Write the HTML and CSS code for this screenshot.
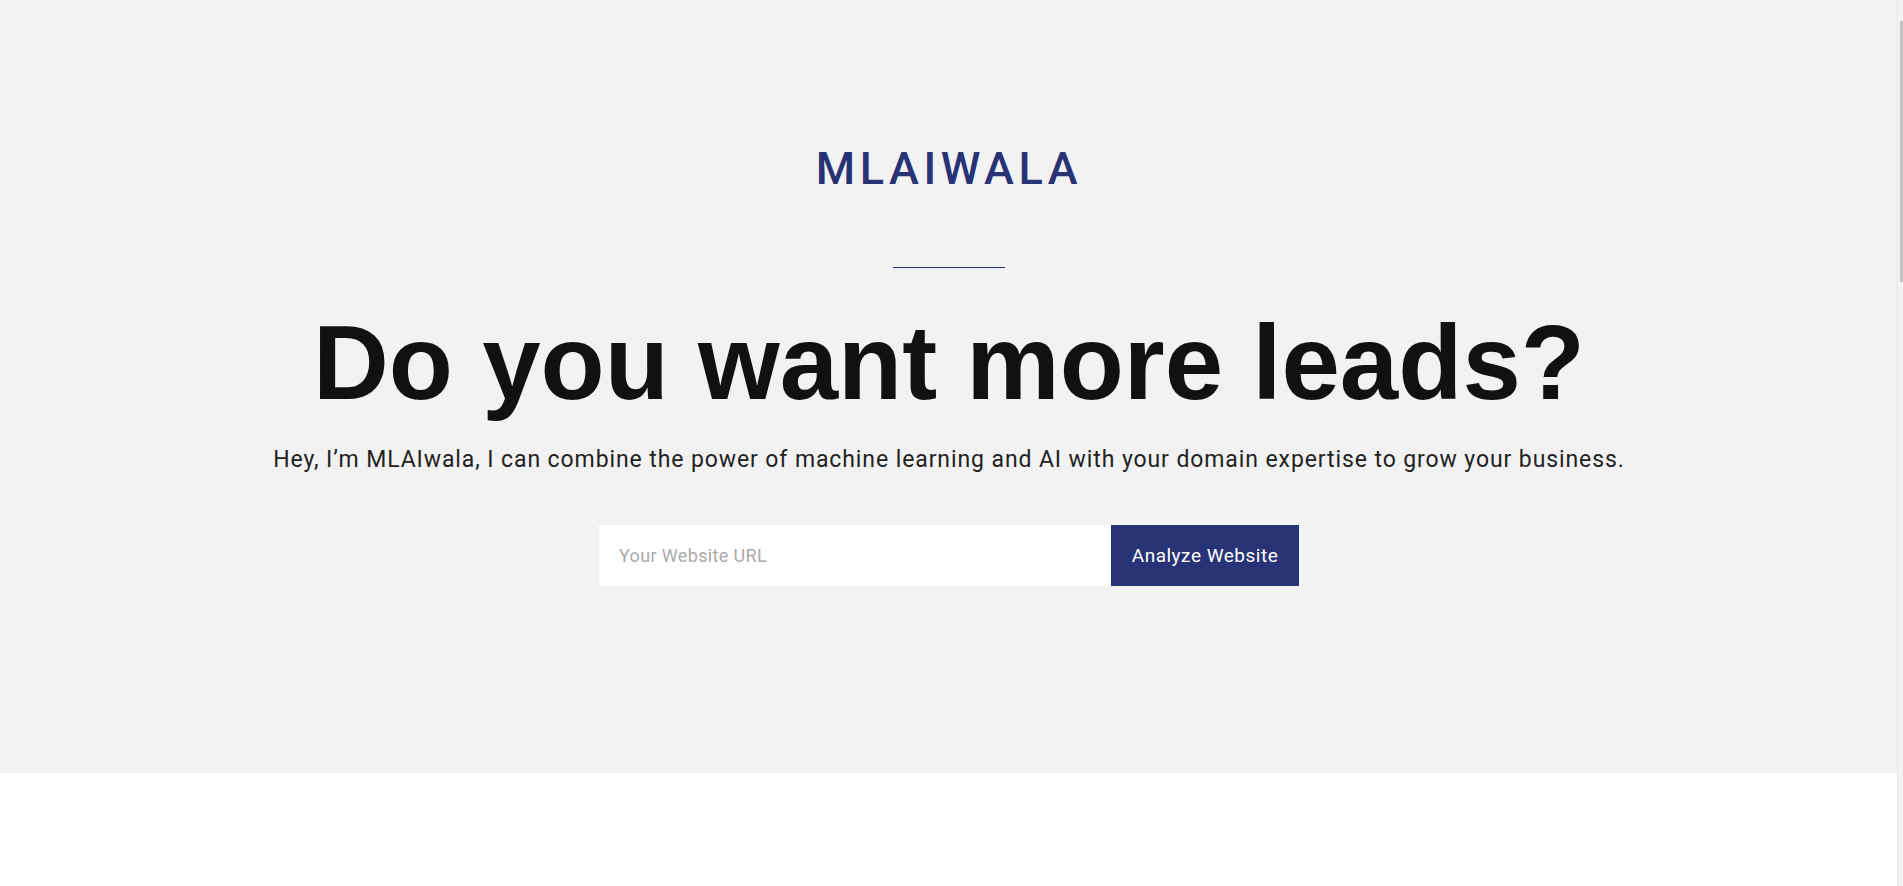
FILE: index.html
```html
<!DOCTYPE html>
<html lang="en">
<head>
<meta charset="utf-8">
<title>MLAIwala</title>
<link rel="stylesheet" href="styles.css">
</head>
<body>
<section class="hero">
  <div class="logo">MLAIWALA</div>
  <hr class="divider">
  <h1 class="headline">Do you want more leads?</h1>
  <p class="lead">Hey, I’m MLAIwala, I can combine the power of machine learning and AI with your domain expertise to grow your business.</p>
  <form class="analyze">
    <input class="url" type="text" placeholder="Your Website URL">
    <button class="submit" type="button">Analyze Website</button>
  </form>
</section>
<section class="below"></section>
<div class="scrollbar"><div class="thumb"></div></div>
</body>
</html>
```

FILE: styles.css
```css
html {
  background: #ffffff;
}
body {
  margin: 0 5px 0 0;
  font-family: Roboto, "Liberation Sans", Arial, sans-serif;
  color: #222;
}
.hero {
  background: #f2f2f2;
  display: flex;
  flex-direction: column;
  align-items: center;
  padding: 146px 0 187px;
}
.logo {
  font-size: 45px;
  line-height: 1;
  font-weight: 500;
  letter-spacing: 4.6px;
  color: #283375;
}
.divider {
  width: 112px;
  height: 1px;
  border: 0;
  margin: 76px 0 0;
  background: #283375;
}
.headline {
  margin: 42px 0 0;
  font-family: "Liberation Sans", Arial, sans-serif;
  font-weight: 700;
  font-size: 105px;
  line-height: 1;
  color: #111;
}
.lead {
  margin: 28px 0 0;
  font-size: 23px;
  line-height: 34px;
  letter-spacing: 0.9px;
  color: #222;
}
.analyze {
  margin-top: 48px;
  display: flex;
  width: 700px;
  height: 61px;
}
.url {
  flex: 1;
  border: 0;
  outline: none;
  background: #fff;
  padding: 0 20px;
  font-family: Roboto, sans-serif;
  font-size: 18px;
  letter-spacing: 0.35px;
  color: #333;
}
.url::placeholder {
  color: #aaa;
}
.submit {
  width: 188px;
  border: 0;
  background: #283375;
  color: #fff;
  font-family: Roboto, sans-serif;
  font-size: 19px;
  letter-spacing: 0.5px;
  cursor: pointer;
}
.below {
  height: 2200px;
  background: #fff;
}
.scrollbar {
  position: fixed;
  top: 0;
  right: 0;
  width: 6px;
  height: 100vh;
  background: #f3f3f3;
  border-left: 1px solid #e6e6e6;
  box-sizing: border-box;
}
.thumb {
  position: absolute;
  top: 21px;
  right: 0;
  width: 3px;
  height: 261px;
  background: #c1c1c1;
}
```
